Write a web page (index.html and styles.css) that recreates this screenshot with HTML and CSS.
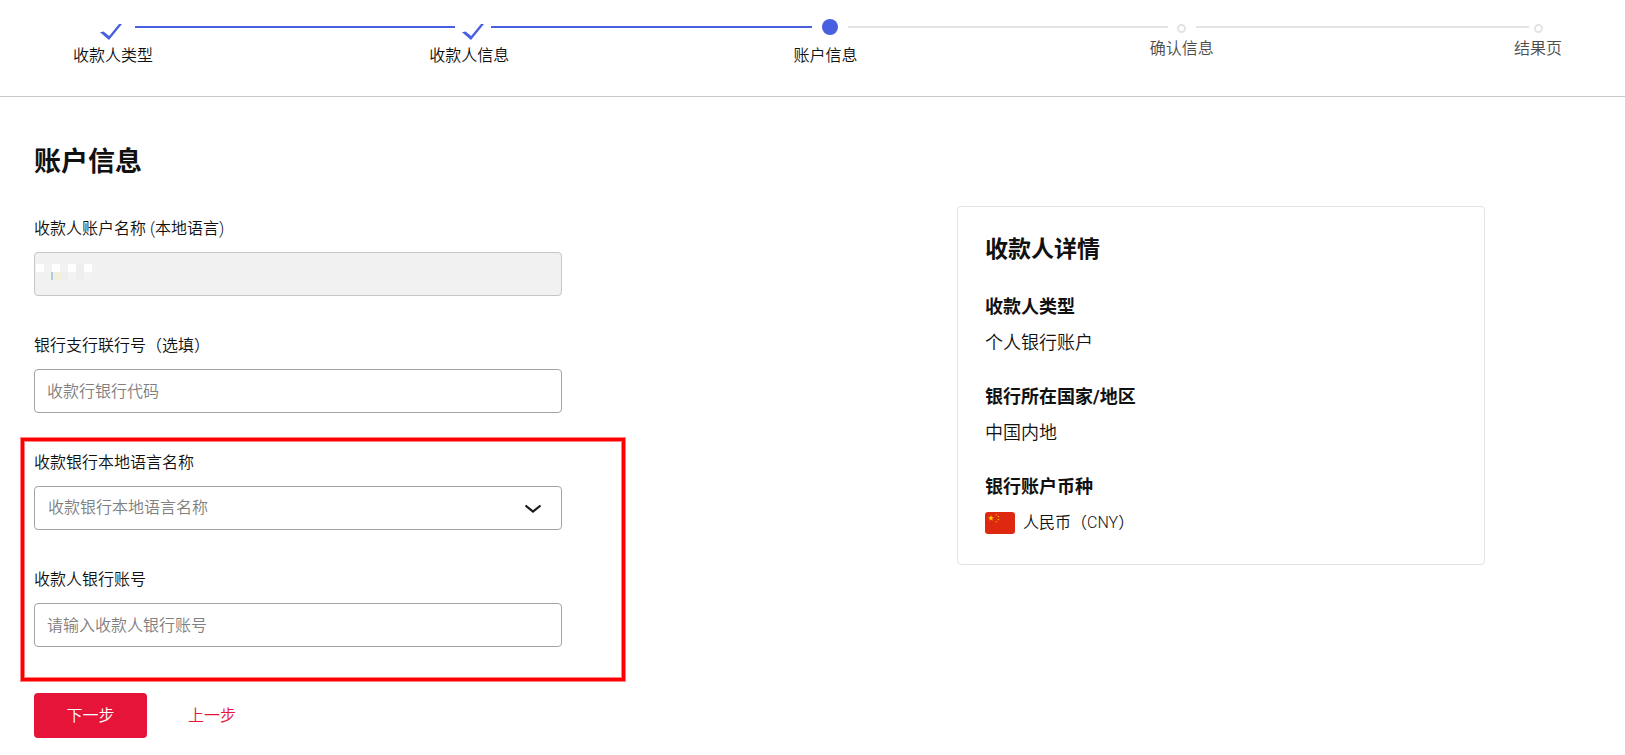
FILE: index.html
```html
<!DOCTYPE html>
<html lang="zh-CN">
<head>
<meta charset="utf-8">
<meta name="viewport" content="width=device-width, initial-scale=1">
<title>账户信息</title>
<link rel="stylesheet" href="styles.css">
</head>
<body>
<header class="stepper">
  <ol class="steps">
    <li class="step step-first">
      <span class="marker"><svg class="check" viewBox="0 0 22 16" aria-hidden="true"><path d="M0 8.2 L3.6 7.6 L9.2 12 L19 0 H22 L9 16 Z"/></svg></span>
      <span class="step-label">收款人类型</span>
    </li>
    <li class="line line-done" aria-hidden="true"></li>
    <li class="step step-mid">
      <span class="marker"><svg class="check" viewBox="0 0 22 16" aria-hidden="true"><path d="M0 8.2 L3.6 7.6 L9.2 12 L19 0 H22 L9 16 Z"/></svg></span>
      <span class="step-label">收款人信息</span>
    </li>
    <li class="line line-done" aria-hidden="true"></li>
    <li class="step step-mid" aria-current="step">
      <span class="marker"><span class="dot"></span></span>
      <span class="step-label">账户信息</span>
    </li>
    <li class="line" aria-hidden="true"></li>
    <li class="step step-todo">
      <span class="marker"><span class="ring"></span></span>
      <span class="step-label">确认信息</span>
    </li>
    <li class="line line-last" aria-hidden="true"></li>
    <li class="step step-todo">
      <span class="marker"><span class="ring"></span></span>
      <span class="step-label">结果页</span>
    </li>
  </ol>
</header>

<main class="content">
  <form class="form">
    <h1 class="title">账户信息</h1>
    <div class="field">
      <label for="name">收款人账户名称 (本地语言)</label>
      <div class="control">
        <input class="input" id="name" type="text" value="1" disabled>
        <svg class="mask" viewBox="0 0 60 18" aria-hidden="true">
          <path fill="#f1f1f1" d="M8 0h8v8H8z"/>
          <path fill="#fff" d="M0 0h8v8H0zM16 0h8v8h-8zM32 0h8v8h-8zM48 0h8v8h-8z"/>
          <path fill="#f0f0dc" d="M18 8h7v8h-7z"/>
          <path fill="#eeeeee" d="M25 8h7v8h-7zM40 0h8v16h-8z"/>
          <path fill="#f3f3f3" d="M32 8h8v8h-8zM48 8h8v8h-8z"/>
        </svg>
      </div>
    </div>
    <div class="field">
      <label for="code">银行支行联行号（选填）</label>
      <input class="input" id="code" type="text" placeholder="收款行银行代码">
    </div>
    <div class="highlight">
      <div class="field">
        <label for="bank">收款银行本地语言名称</label>
        <div class="control">
          <select class="input select" id="bank"><option>收款银行本地语言名称</option></select>
          <svg class="chevron" viewBox="0 0 18 10" aria-hidden="true"><path d="M1.5 1.5 L9 7.6 L16.5 1.5"/></svg>
        </div>
      </div>
      <div class="field">
        <label for="account">收款人银行账号</label>
        <input class="input" id="account" type="text" placeholder="请输入收款人银行账号">
      </div>
    </div>
    <div class="actions">
      <button class="next" type="button">下一步</button>
      <a class="prev" href="#">上一步</a>
    </div>
  </form>

  <aside class="card">
    <h2 class="card-title">收款人详情</h2>
    <dl class="details">
      <div class="detail"><dt>收款人类型</dt><dd>个人银行账户</dd></div>
      <div class="detail"><dt>银行所在国家/地区</dt><dd>中国内地</dd></div>
      <div class="detail"><dt>银行账户币种</dt>
        <dd class="currency">
          <svg class="flag" viewBox="0 0 30 22" aria-hidden="true">
            <rect width="30" height="22" rx="3" fill="#de2910"/>
            <g fill="#ffde00">
              <path d="M6 3l.7 2.2H9L7.100 6.500l.7 2.200L6 7.300 4.200 8.700l.7-2.200L3 5.200h2.300z"/>
              <circle cx="11.200" cy="2.800" r=".6"/><circle cx="13.400" cy="4.600" r=".7"/><circle cx="13.400" cy="7.600" r=".7"/><circle cx="11.200" cy="9.800" r=".6"/>
            </g>
          </svg>
          <span>人民币（CNY）</span>
        </dd>
      </div>
    </dl>
  </aside>
</main>
</body>
</html>
```
FILE: styles.css
```css
* { box-sizing: border-box; }
body {
  margin: 0;
  background: #fff;
  color: #111;
  font: 350 16px/24px Roboto, "Noto Sans CJK SC", sans-serif;
}
h1, h2, ol, dl, dd { margin: 0; padding: 0; }

.stepper {
  height: 97px;
  padding: 19px 47px 0 73px;
  border-bottom: 1px solid #c6c6c6;
}
.steps { display: flex; list-style: none; }
.step {
  flex: 0 0 80px;
  display: flex;
  flex-direction: column;
  align-items: center;
  white-space: nowrap;
}
.marker { display: flex; justify-content: center; height: 25px; }
.step-first .marker { padding-right: 4px; }
.step-mid .marker { padding-left: 8px; }
.check { width: 22px; height: 16px; margin-top: 5px; fill: #485fe0; }
.dot { width: 16px; height: 16px; border-radius: 50%; background: #485fe0; }
.ring {
  width: 9px;
  height: 9px;
  margin-top: 5px;
  border: 2px solid #e3e3e3;
  border-radius: 50%;
}
.step-todo .marker { height: 18px; }
.step-todo .step-label { color: #4d4d4d; }
.line { flex: 1; padding-top: 7px; }
.line::before {
  content: "";
  display: block;
  height: 2px;
  margin: 0 -26px 0 -18px;
  background: #e3e3e3;
}
.line-done::before { background: #485fe0; }
.line-last::before { margin-left: -26px; margin-right: -31px; }

.content {
  display: flex;
  justify-content: space-between;
  align-items: flex-start;
  gap: 40px;
  padding: 47px 140px 18px 34px;
}
.form { flex: 0 1 528px; }
.title { margin-bottom: 37px; font-size: 27px; line-height: 36px; font-weight: 700; }
.field { display: flex; flex-direction: column; gap: 11px; margin-bottom: 38px; }
.control { position: relative; display: flex; }
.input {
  width: 100%;
  height: 44px;
  padding: 0 12px;
  border: 1px solid #a3a3a3;
  border-radius: 4px;
  background: #fff;
  color: #1a1a1a;
  font: inherit;
}
.input::placeholder { color: #808080; opacity: 1; }
.input:disabled { border-color: #c6c6c6; background: #f1f1f1; color: #999; }
.mask { position: absolute; left: 2px; top: 12px; width: 60px; height: 18px; }
.select { appearance: none; padding: 0 13px; color: #808080; }
.chevron {
  position: absolute;
  right: 20px;
  top: 18px;
  width: 18px;
  height: 10px;
  fill: none;
  stroke: #1a1a1a;
  stroke-width: 2.2;
  pointer-events: none;
}
.highlight { position: relative; }
.highlight .field:last-child { margin-bottom: 0; }
.highlight::before {
  content: "";
  position: absolute;
  inset: -13px -63px -34px -13px;
  border: 3px solid #f00;
  box-shadow: 0 0 0 1px #ff8080, inset 0 0 0 1px #ff8080;
  pointer-events: none;
}
.actions { display: flex; align-items: center; gap: 41px; margin-top: 46px; }
.next {
  width: 113px;
  height: 45px;
  border: 0;
  border-radius: 4px;
  background: #e61439;
  color: #fff;
  font: inherit;
}
.prev { color: #e61439; text-decoration: none; }

.card {
  flex: 0 1 528px;
  margin-top: 62px;
  padding: 27px 27px 29px;
  border: 1px solid #e3e3e3;
  border-radius: 4px;
}
.card-title { margin-bottom: 29px; font-size: 23px; line-height: 32px; font-weight: 700; }
.details { display: grid; gap: 30px; font-size: 18px; }
.detail { display: grid; gap: 12px; }
.detail dt { font-weight: 700; }
.currency { display: flex; align-items: center; gap: 8px; font-size: 16px; }
.flag { width: 30px; height: 22px; }
```
